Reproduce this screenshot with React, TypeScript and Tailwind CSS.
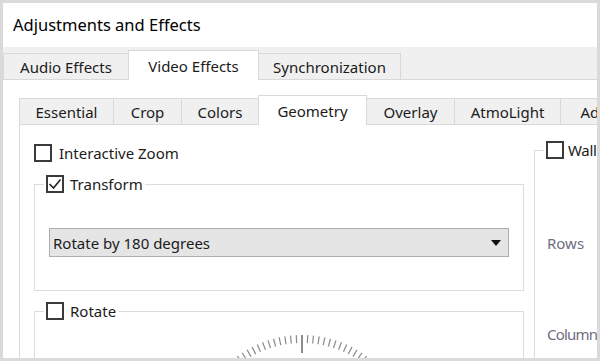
import React from 'react';

const outerTabs = [
  { label: 'Audio Effects', w: 'w-[126px]' },
  { label: 'Video Effects', w: 'w-[131px]', active: true },
  { label: 'Synchronization', w: 'w-[143px]' },
];

const innerTabs = [
  { label: 'Essential', w: 'w-[95px]' },
  { label: 'Crop', w: 'w-[69px]' },
  { label: 'Colors', w: 'w-[78px]' },
  { label: 'Geometry', w: 'w-[109px]', active: true },
  { label: 'Overlay', w: 'w-[89px]' },
  { label: 'AtmoLight', w: 'w-[107px]' },
  { label: 'Advanced', w: 'w-[110px]' },
];

const Check = ({ checked }: { checked?: boolean }) => (
  <span className="flex h-[18px] w-[18px] shrink-0 items-center justify-center border-2 border-[#3a3a3a] bg-white">
    {checked && (
      <svg width="14" height="14" viewBox="0 0 14 14">
        <polyline points="1.5,7 5.5,11 12.5,2.5" fill="none" stroke="#222" strokeWidth="1.6" />
      </svg>
    )}
  </span>
);

const Dial = () => {
  const cx = 267;
  const cy = 124;
  const ticks = [];
  for (let a = -45; a <= 45; a += 3) {
    const rad = (a * Math.PI) / 180;
    const center = a === 0;
    const r1 = center ? 92 : 102;
    const r2 = 110;
    ticks.push(
      <line
        key={a}
        x1={cx + r1 * Math.sin(rad)}
        y1={cy - r1 * Math.cos(rad)}
        x2={cx + r2 * Math.sin(rad)}
        y2={cy - r2 * Math.cos(rad)}
        stroke={center ? '#707070' : '#8a8a8a'}
        strokeWidth={center ? 1.6 : 1.2}
      />
    );
  }
  return (
    <svg width="488" height="60" viewBox="0 0 488 60" className="block">
      {ticks}
    </svg>
  );
};

const Tab = ({ label, w, active }: { label: string; w: string; active?: boolean }) =>
  active ? (
    <div className={`${w} relative z-10 -ml-px mb-[-1px] flex h-[30px] shrink-0 items-center justify-center border border-b-0 border-[#d9d9d9] bg-white`}>
      {label}
    </div>
  ) : (
    <div className={`${w} -ml-px flex h-[26px] shrink-0 items-center justify-center border border-b-0 border-[#d9d9d9] bg-[#f0f0f0]`}>
      {label}
    </div>
  );

export default function App() {
  return (
    <div className="h-[361px] w-[600px] bg-[#dadada] p-[3px] font-['Noto_Sans','DejaVu_Sans',sans-serif] text-[15px] leading-[20px] text-[#1b1b1b]">
      <div className="flex h-full flex-col overflow-hidden bg-white">
        <div className="flex h-[44px] shrink-0 items-center pl-[10px] text-[16.5px] text-black">
          Adjustments and Effects
        </div>

        <div className="flex h-[33px] shrink-0 items-end border-b border-[#d9d9d9] bg-[#f0f0f0] pl-px">
          {outerTabs.map((t) => (
            <Tab key={t.label} {...t} />
          ))}
        </div>

        <div className="min-h-0 flex-1 overflow-hidden pl-[16px] pt-[15px]">
          <div className="flex h-[30px] w-[700px] items-end border-b border-[#d9d9d9] pl-px">
            {innerTabs.map((t) => (
              <Tab key={t.label} {...t} />
            ))}
          </div>

          <div className="flex w-[700px] border-l border-[#d9d9d9]">
            <div className="w-[505px] shrink-0 pl-[14px] pt-[18px]">
              <label className="flex h-[19px] items-center gap-[7px]">
                <Check />
                <span>Interactive Zoom</span>
              </label>

              <fieldset className="mt-[12px] w-[490px] border border-[#dcdcdc]">
                <legend className="ml-[9px] flex h-[20px] items-center gap-[6px] px-[2px]">
                  <Check checked />
                  <span>Transform</span>
                </legend>
                <div className="mx-[14px] mb-[33px] mt-[34px] flex h-[29px] items-center justify-between border border-[#adadad] bg-[#e5e5e5] pl-[3px] pr-[7px]">
                  <span>Rotate by 180 degrees</span>
                  <svg width="10" height="6" viewBox="0 0 10 6">
                    <polygon points="0,0 10,0 5,6" fill="#111" />
                  </svg>
                </div>
              </fieldset>

              <fieldset className="mt-[10px] w-[490px] border border-[#dcdcdc]">
                <legend className="ml-[9px] flex h-[20px] items-center gap-[6px] px-[2px]">
                  <Check />
                  <span>Rotate</span>
                </legend>
                <Dial />
              </fieldset>
            </div>

            <fieldset className="ml-[9px] mt-[15px] w-[100px] shrink-0 border border-[#dcdcdc] pl-[12px]">
              <legend className="ml-[-3px] flex h-[20px] items-center gap-[4px] px-[2px]">
                <Check />
                <span className="tracking-[-0.3px]">Wall</span>
              </legend>
              <div className="mt-[73px] text-[#6e6e82]">Rows</div>
              <div className="mt-[71px] tracking-[-0.8px] text-[#6e6e82]">Columns</div>
              <div className="h-[40px]" />
            </fieldset>
          </div>
        </div>
      </div>
    </div>
  );
}
